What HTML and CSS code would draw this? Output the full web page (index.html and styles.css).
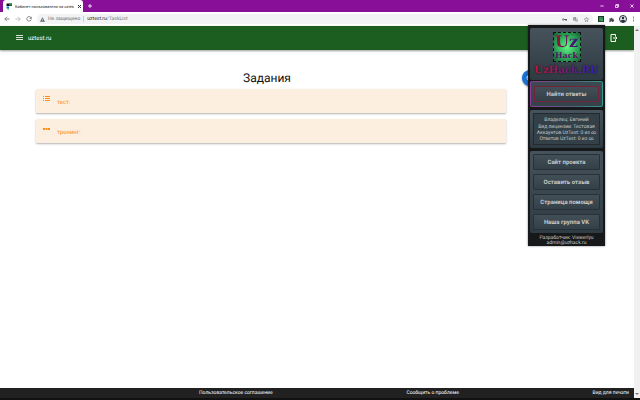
FILE: index.html
```html
<!DOCTYPE html>
<html lang="ru">
<head>
  <meta charset="UTF-8" />
  <title>Кабинет пользователя на uztest.ru</title>
  <link rel="stylesheet" href="styles.css">
</head>
<body>
  <div class="browser">
    <!-- Tabs -->
    <div class="tabs">
      <div class="tab">
        <svg class="favicon" viewBox="0 0 12 14"><path d="M1 1h11v5H1z" fill="#111"/><path d="M6 1h6v4H6z" fill="#1a9b3c"/><path d="M1 7h5v4H1z" fill="#1976d2"/><path d="M3 11h3v2H3z" fill="#19a84a"/></svg>
        <span class="tab-title">Кабинет пользователя на uztes</span>
        <button class="close" aria-label="Закрыть"><svg viewBox="0 0 10 10"><path d="M2 2l6 6M8 2l-6 6"/></svg></button>
      </div>
      <button class="new-tab" aria-label="Новая вкладка"><svg viewBox="0 0 10 10"><path d="M5 0v10M0 5h10"/></svg></button>
      <div class="window-buttons">
        <button aria-label="Свернуть"><svg viewBox="0 0 10 10"><path d="M1 5h8"/></svg></button>
        <button aria-label="Окно"><svg viewBox="0 0 10 10"><path d="M1 3h6v6H1zM3 3V1h6v6H7"/></svg></button>
        <button aria-label="Закрыть окно"><svg viewBox="0 0 10 10"><path d="M1 1l8 8M9 1l-8 8"/></svg></button>
      </div>
    </div>

    <!-- Address bar -->
    <div class="toolbar">
      <button class="tool" aria-label="Назад"><svg viewBox="0 0 16 16"><path d="M15 8H2M8 2L2 8l6 6"/></svg></button>
      <button class="tool muted" aria-label="Вперёд"><svg viewBox="0 0 16 16"><path d="M1 8h13M8 2l6 6-6 6"/></svg></button>
      <button class="tool" aria-label="Обновить"><svg viewBox="0 0 16 16"><path d="M13 4a6 6 0 1 0 1 5"/><path d="M15 1v6H9z" fill="#5f6368" stroke="none"/></svg></button>
      <div class="address">
        <svg class="warn" viewBox="0 0 16 16"><path d="M8 1l8 14H0z" fill="#5f6368"/><path d="M8 6v4M8 11v2" stroke="#fff" stroke-width="2"/></svg>
        <span class="insecure">Не защищено</span>
        <span class="url"><b>uztest.ru</b>/TaskList</span>
        <svg class="address-icon" viewBox="0 0 16 16"><circle cx="4" cy="8" r="2.5" fill="none" stroke="#444" stroke-width="2"/><path d="M7 8h9M14 8v4M11 8v3" stroke="#444" stroke-width="2.5"/></svg>
        <svg class="address-icon" viewBox="0 0 16 16"><path d="M1 1h9v10H1z" fill="#70757a"/><path d="M3 4h5M5 3v2M4 9l3-4M4 6l4 3" stroke="#fff" fill="none"/><path d="M8 6h7v9H8z" fill="#fff" stroke="#70757a"/><path d="M10 13l2-5 2 5M10 12h3" stroke="#555" fill="none"/></svg>
        <svg class="address-icon" viewBox="0 0 16 16"><path d="M8 1l2 5 5 .5-4 3.5 1 5-4-3-4 3 1-5-4-3.5 5-.5z" fill="none" stroke="#5f6368" stroke-width="1.5"/></svg>
      </div>
      <svg class="ext" viewBox="0 0 16 16"><path d="M0 0h16v16H0z" fill="#173d25"/><path d="M3 3h10v11H3z" fill="#30c85b"/><path d="M4 3v5h4V3M9 4h4l-4 4h4M4 10v4M8 10v4M4 12h4" fill="none" stroke="#5a194e" stroke-width="1"/></svg>
      <svg class="tool-icon" viewBox="0 0 16 16"><path d="M1 5h4a2.5 2.5 0 1 1 5 0h4v4a2.5 2.5 0 1 1 0 4v3h-4a2.5 2.5 0 0 0-5 0H1v-4a2.5 2.5 0 0 0 0-4z" fill="#4b4f54"/></svg>
      <svg class="avatar" viewBox="0 0 16 16"><circle cx="8" cy="8" r="7" fill="#e8eaed" stroke="#26323d" stroke-width="2"/><circle cx="8" cy="6" r="2.5" fill="#26323d"/><path d="M3 12q5-5 10 0-5 5-10 0z" fill="#26323d"/></svg>
      <svg class="more" viewBox="0 0 6 16"><circle cx="3" cy="3" r="1.5"/><circle cx="3" cy="8" r="1.5"/><circle cx="3" cy="13" r="1.5"/></svg>
    </div>

    <div class="viewport">
      <div class="page">
        <header class="header">
          <button class="menu" aria-label="Меню"><svg viewBox="0 0 7 6"><path d="M0 .5h7M0 2.500h7M0 4.500h7"/></svg></button>
          <a class="brand" href="#">uztest.ru</a>
          <button class="exit" aria-label="Выход"><svg viewBox="0 0 16 16"><path d="M11 5V1H2v14h9v-4" /><path d="M6 8h8M11 5l3 3-3 3"/></svg></button>
        </header>

        <main class="content">
          <div class="tasks">
            <h1>Задания</h1>
            <a class="task" href="#">
              <svg viewBox="0 0 7 8"><path d="M0 1.500h1M0 3.500h1M0 5.500h1M2 1.500h5M2 3.500h5M2 5.500h5" /></svg>
              <span>тест:</span>
            </a>
            <a class="task" href="#">
              <svg viewBox="0 0 7 8"><path d="M0 4h2M2.500 4h2M5 4h2" stroke-width="2"/></svg>
              <span>тренинг:</span>
            </a>
          </div>
          <button class="fab" aria-label="Обновить задания"><svg viewBox="0 0 16 16"><path d="M13 4a6 6 0 1 0 1 5M14 1v5H9"/></svg></button>
        </main>

        <footer class="footer">
          <a href="#">Пользовательское соглашение</a>
          <a href="#">Сообщить о проблеме</a>
          <a href="#">Вид для печати</a>
        </footer>
      </div>
      <div class="scrollbar">
        <svg viewBox="0 0 6 6"><path d="M1 4l2-2 2 2z"/></svg>
        <svg viewBox="0 0 6 6"><path d="M1 2l2 2 2-2z"/></svg>
      </div>
    </div>
  </div>

  <!-- Extension popup -->
  <aside class="popup">
    <div class="panel logo-panel">
      <div class="logo"><span class="logo-uz">Uz</span><span class="logo-hack">Hack</span></div>
      <div class="logo-name">UzHack.RU</div>
    </div>
    <div class="find-panel">
      <button class="find">Найти ответы</button>
    </div>
    <div class="panel">
      <div class="info">
        <p class="owner">Владелец: Евгений</p>
        <p>Вид лицензии: Тестовая</p>
        <p>Аккаунтов UzTest: 0 из ∞</p>
        <p>Ответов UzTest: 0 из ∞</p>
      </div>
    </div>
    <div class="panel links">
      <button class="btn">Сайт проекта</button>
      <button class="btn">Оставить отзыв</button>
      <button class="btn">Страница помощи</button>
      <button class="btn">Наша группа VK</button>
    </div>
    <div class="developer">Разработчик: Viewerlyu<br>admin@uzhack.ru</div>
  </aside>
</body>
</html>
```

FILE: styles.css
```css
* { box-sizing: border-box; }
body {
  margin: 0;
  font-family: Roboto, "Liberation Sans", sans-serif;
  font-size: 5px;
  text-rendering: geometricPrecision;
  background: #fff;
}
button {
  font-family: inherit;
  text-rendering: inherit;
  border: none;
  padding: 0;
  background: none;
  cursor: pointer;
}
a { color: inherit; text-decoration: none; }
svg { display: block; flex-shrink: 0; }
.browser {
  min-height: 100vh;
  display: flex;
  flex-direction: column;
}

/* Browser window */
.tabs {
  height: 12px;
  display: flex;
  align-items: center;
  background: #881098;
}
.tab {
  width: 80px;
  height: 12px;
  margin-left: 3px;
  padding: 0 2px 0 3px;
  display: flex;
  align-items: center;
  gap: 3px;
  background: #fff;
  border-radius: 3px 3px 0 0;
}
.favicon { width: 6px; height: 7px; }
.tab-title {
  flex: 1;
  font-size: 4px;
  white-space: nowrap;
  color: #222;
}
.close svg {
  width: 5px;
  height: 5px;
  stroke: #333;
  stroke-width: 2;
}
.new-tab { margin-left: 5px; }
.new-tab svg {
  width: 4px;
  height: 4px;
  stroke: #fff;
  stroke-width: 2;
}
.window-buttons {
  margin-left: auto;
  padding-right: 6px;
  display: flex;
  gap: 11px;
}
.window-buttons svg {
  width: 4px;
  height: 4px;
  fill: none;
  stroke: #fff;
  stroke-width: 2;
}
.toolbar {
  height: 14px;
  padding: 0 5px 0 4px;
  display: flex;
  align-items: center;
  gap: 5px;
  background: #fff;
}
.tool svg {
  width: 6px;
  height: 6px;
  fill: none;
  stroke: #5f6368;
  stroke-width: 2;
}
.muted { opacity: 0.5; }
.address {
  flex: 1;
  height: 10px;
  padding: 0 4px 0 3px;
  display: flex;
  align-items: center;
  gap: 6px;
  border-radius: 5px;
  background: #f1f3f4;
}
.warn { width: 5px; height: 5px; }
.insecure {
  margin-left: -3px;
  padding-right: 3px;
  color: #6b6f73;
  border-right: 1px solid #ccc;
}
.url {
  flex: 1;
  margin-left: -3px;
  color: #777;
}
.url b { font-weight: normal; color: #222; }
.address-icon, .tool-icon { width: 5px; height: 5px; }
.ext { width: 6px; height: 6px; }
.avatar { width: 8px; height: 8px; }
.more { width: 3px; height: 6px; fill: #5f6368; }

/* Page */
.viewport {
  flex: 1;
  display: flex;
}
.page {
  flex: 1;
  display: flex;
  flex-direction: column;
}
.header {
  height: 24px;
  padding: 0 16px;
  display: flex;
  align-items: center;
  gap: 5px;
  background: #1b5e20;
  color: #fff;
  box-shadow: 0 1px 2px rgba(0, 0, 0, 0.4);
}
.menu svg {
  width: 7px;
  height: 6px;
  stroke: #d5e2d6;
  stroke-width: 1;
}
.brand { font-size: 6px; }
.exit { margin-left: auto; }
.exit svg {
  width: 8px;
  height: 8px;
  fill: none;
  stroke: #fff;
  stroke-width: 2;
}
.content {
  flex: 1;
  padding: 20px 96px 0 36px;
  display: flex;
  align-items: flex-start;
  gap: 16px;
}
.tasks { flex: 1; }
h1 {
  margin: 0 8px 3px 0;
  font-size: 12px;
  line-height: 16px;
  font-weight: normal;
  text-align: center;
  color: #111;
}
.task {
  height: 24px;
  margin-bottom: 6px;
  padding: 6px 7px;
  display: flex;
  gap: 7px;
  background: #fdefe0;
  color: #ff8c1a;
  border-radius: 1px;
  box-shadow: 0 1px 2px rgba(0, 0, 0, 0.3);
}
.task svg {
  width: 7px;
  height: 8px;
  stroke: #ff8c1a;
  stroke-width: 1;
}
.task span {
  padding-top: 4px;
  font-size: 6px;
  line-height: 8px;
}
.fab {
  width: 16px;
  height: 16px;
  display: grid;
  place-items: center;
  border-radius: 50%;
  background: #1873d3;
  box-shadow: 0 1px 2px rgba(0, 0, 0, 0.4);
}
.fab svg {
  width: 8px;
  height: 8px;
  fill: none;
  stroke: #fff;
  stroke-width: 2;
}
.footer {
  height: 12px;
  padding: 0 5px 0 199px;
  display: flex;
  justify-content: space-between;
  align-items: center;
  background: #212121;
  color: #fff;
  border-bottom: 2px solid #111;
}
.scrollbar {
  width: 6px;
  padding: 1px 0;
  display: flex;
  flex-direction: column;
  justify-content: space-between;
  background: #f1f1f1;
  border-bottom: 2px solid #111;
}
.scrollbar svg { width: 6px; height: 6px; fill: #777; }

/* Extension popup lies over the page */
.popup {
  position: absolute;
  top: 25px;
  right: 35px;
  width: 77px;
  padding: 3px 2px 0;
  display: flex;
  flex-direction: column;
  gap: 3px;
  background: #171819;
  color: #c5c9cb;
  text-align: center;
  box-shadow: 0 0 2px rgba(0, 0, 0, 0.5);
}
.panel {
  padding: 3px;
  border-radius: 2px;
  background: linear-gradient(#46535c, #2f3b42);
}
.logo-panel {
  height: 52px;
  padding-top: 4px;
  display: flex;
  flex-direction: column;
  align-items: center;
  gap: 3px;
}
.logo {
  width: 28px;
  height: 30px;
  display: flex;
  flex-direction: column;
  align-items: center;
  border: 1px dashed #111;
  background: radial-gradient(#62f583, #2aa557 60%, #1d5a38);
  font-family: "DejaVu Serif", serif;
  font-weight: bold;
  color: #5c1266;
}
.logo-uz {
  font-size: 16px;
  line-height: 18px;
  color: transparent;
  background: linear-gradient(90deg, #a0122c, #321888);
  background-clip: text;
}
.logo-hack { font-size: 8px; line-height: 8px; }
.logo-name {
  font-family: "DejaVu Serif", serif;
  font-size: 10px;
  line-height: 12px;
  font-weight: bold;
  color: transparent;
  background: linear-gradient(90deg, #c8143c, #7a1c80 50%, #2a20d0);
  background-clip: text;
  filter: drop-shadow(0 0 1px #111);
}
.find-panel {
  margin-top: -2px;
  padding: 4px 3px;
  border: 1px solid transparent;
  border-radius: 2px;
  background:
    linear-gradient(#3e4a52, #36424a) padding-box,
    linear-gradient(90deg, #8a3f98, #52607a 55%, #2f9a8c) border-box;
}
.find {
  display: block;
  width: 100%;
  height: 16px;
  border: 1px solid #75233c;
  border-radius: 1px;
  background: linear-gradient(#434f56, #344047);
  color: #c5c9cb;
  font-size: 6px;
  font-weight: bold;
}
.info {
  padding: 3px 0 2px;
  border: 1px solid #222a30;
  background: #344047;
}
.info p {
  margin: 0;
  line-height: 6px;
  white-space: nowrap;
}
.info .owner { margin-bottom: 1px; }
.links {
  display: flex;
  flex-direction: column;
  gap: 4px;
}
.btn {
  height: 16px;
  border: 1px solid #273036;
  border-radius: 1px;
  background: linear-gradient(#434f56, #344047);
  color: #c5c9cb;
  font-size: 6px;
  font-weight: bold;
  white-space: nowrap;
}
.developer { line-height: 5px; }
```
